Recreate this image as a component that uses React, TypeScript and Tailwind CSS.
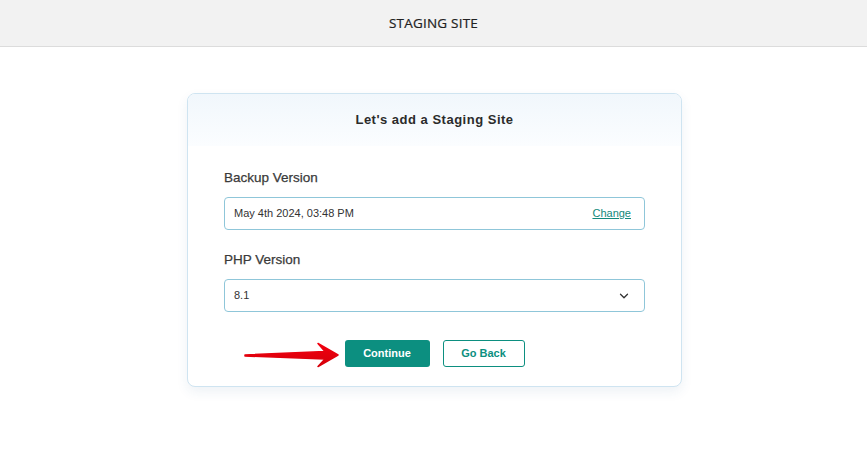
import { ChevronDown } from 'lucide-react'

const sans = { fontFamily: '"Liberation Sans", Arial, sans-serif' }

function RedArrow() {
  return (
    <svg
      width="96"
      height="28"
      viewBox="0 0 96 28"
      className="pointer-events-none absolute top-[1px] left-[20px]"
    >
      <defs>
        <linearGradient id="arrowFill" x1="0" y1="0" x2="0" y2="1">
          <stop offset="0" stopColor="#f2000f" />
          <stop offset="1" stopColor="#d5000a" />
        </linearGradient>
      </defs>
      <polygon
        points="1,14 81,10.5 74,2.5 94,14 74,25.5 81,18 1,15"
        fill="url(#arrowFill)"
        stroke="url(#arrowFill)"
        strokeWidth="1.5"
        strokeLinejoin="round"
      />
    </svg>
  )
}

export default function App() {
  return (
    <div className="min-h-screen bg-white" style={sans}>
      <header className="flex h-[47px] items-center justify-center border-b border-[#dcdcdc] bg-[#f2f2f2]">
        <span
          className="text-[13.5px] font-medium tracking-[0.2px] text-[#222] [-webkit-text-stroke:0.2px_#222]"
          style={{ fontFamily: '"Open Sans", "Noto Sans", sans-serif' }}
        >
          STAGING SITE
        </span>
      </header>

      <main className="flex justify-center pt-[46px] pl-[2px]">
        <div className="w-[495px] overflow-hidden rounded-lg border border-[#cfe4f1] bg-white shadow-[0_5px_12px_rgba(40,90,140,0.08)]">
          <div className="flex h-[52px] items-center justify-center bg-gradient-to-b from-[#f1f7fc] to-[#fbfdff]">
            <h1 className="text-[13px] font-bold tracking-[0.5px] text-[#2b2b2b]">
              Let's add a Staging Site
            </h1>
          </div>

          <div className="px-[36px] pt-[22px] pb-[19px]">
            <label className="block text-[13.5px] leading-5 text-[#3a3a3a] [-webkit-text-stroke:0.25px_#3a3a3a]">
              Backup Version
            </label>
            <div className="mt-[9px] flex h-[33px] items-center justify-between rounded-[4px] border border-[#8fc6d9] px-[9px] text-[11px] text-[#333]">
              <span>May 4th 2024, 03:48 PM</span>
              <a href="#" className="mr-[4px] text-[#11897b] underline">
                Change
              </a>
            </div>

            <label className="mt-[20px] block text-[13.5px] leading-5 text-[#3a3a3a] [-webkit-text-stroke:0.25px_#3a3a3a]">
              PHP Version
            </label>
            <div className="mt-[9px] flex h-[33px] items-center justify-between rounded-[4px] border border-[#8fc6d9] pr-[13px] pl-[9px] text-[11px] text-[#333]">
              <span>8.1</span>
              <ChevronDown size={14} strokeWidth={2.2} className="text-[#333]" />
            </div>

            <div className="relative mt-[28px] flex justify-center gap-[13px]">
              <RedArrow />
              <button className="h-[27px] w-[85px] rounded-[3px] bg-[#0c8f80] text-[11px] font-bold text-white">
                Continue
              </button>
              <button className="h-[27px] w-[82px] rounded-[3px] border border-[#0c8f80] bg-white text-[11px] font-bold text-[#0c8f80]">
                Go Back
              </button>
            </div>
          </div>
        </div>
      </main>
    </div>
  )
}
